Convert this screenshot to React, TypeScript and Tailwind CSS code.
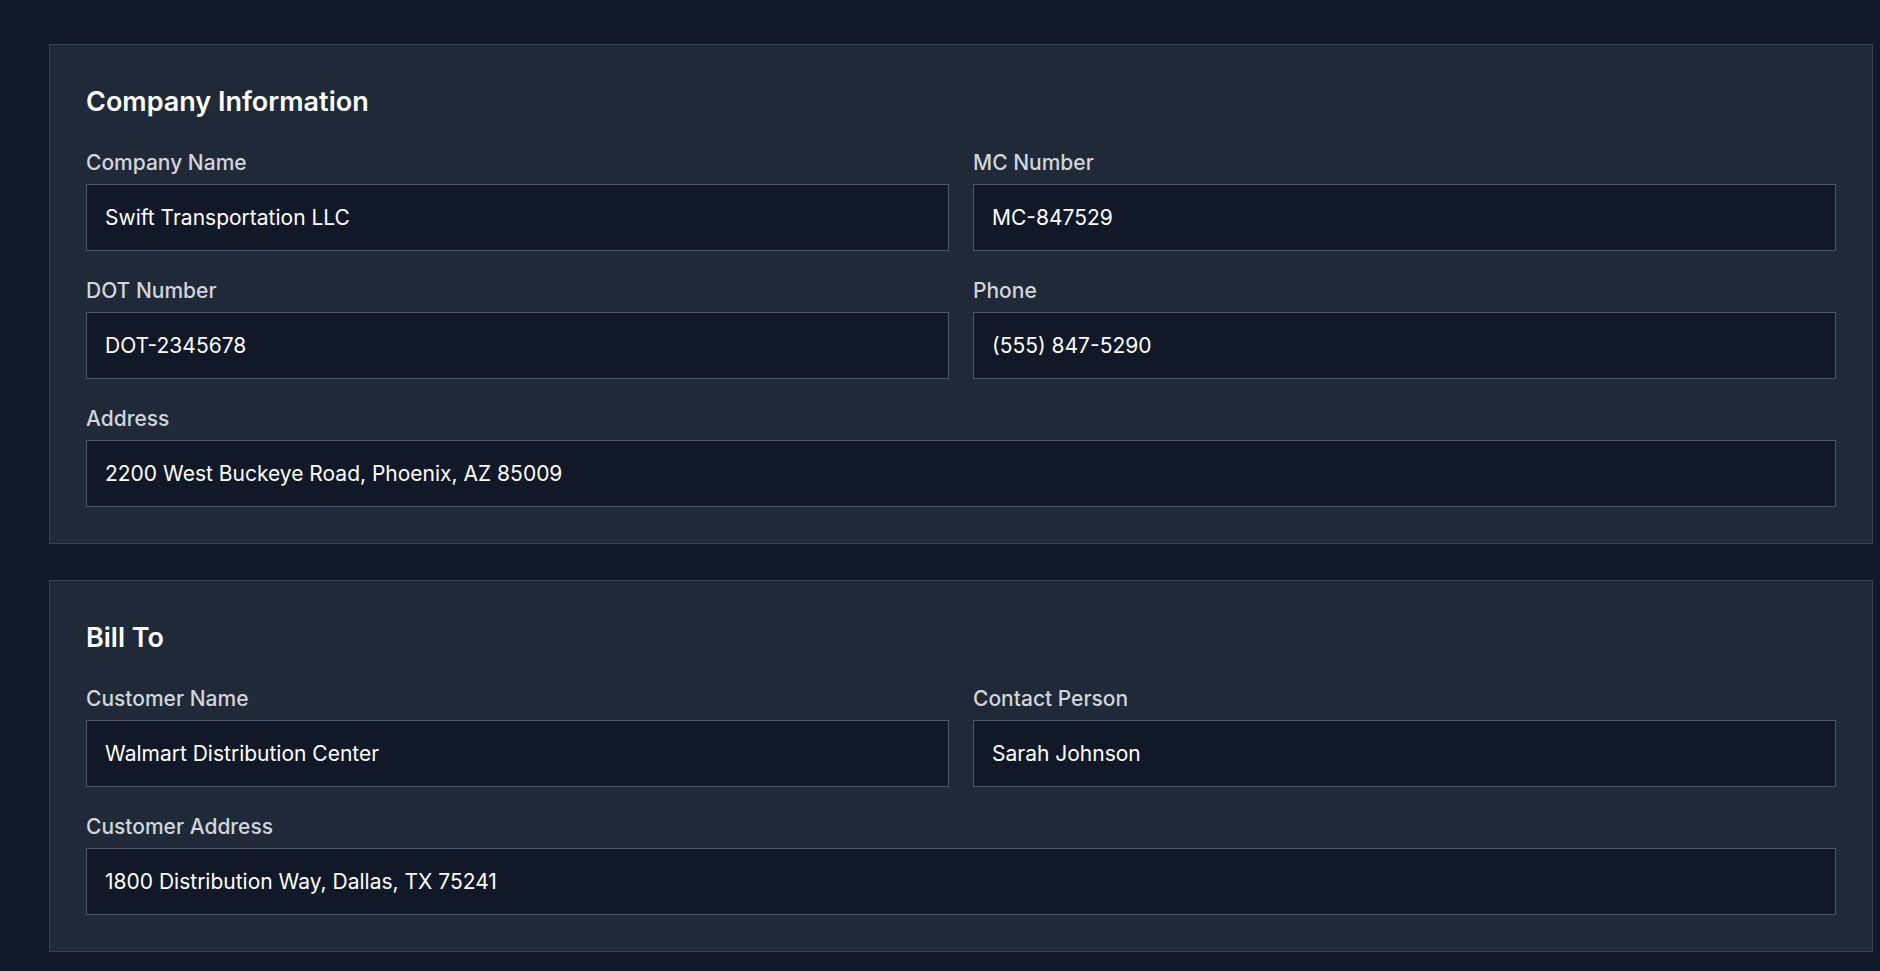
import React from 'react';

interface FieldProps {
  label: string;
  value: string;
  full?: boolean;
}

function Field({ label, value, full }: FieldProps) {
  return (
    <div className={full ? 'col-span-2 flex flex-col' : 'flex flex-col'}>
      <label className="text-[21px] leading-[28px] font-medium text-gray-300 mb-[7px]">{label}</label>
      <input
        type="text"
        readOnly
        value={value}
        className="h-[67px] w-full bg-[#111827] border border-[#4b5563] px-[18px] text-[21px] text-white outline-none"
      />
    </div>
  );
}

function Section({ title, children }: { title: string; children: React.ReactNode }) {
  return (
    <section className="bg-[#1f2937] border border-[#374151] px-[36px] pt-[37px] pb-[36px]">
      {/* Section heading */}
      <h2 className="text-[27px] leading-[40px] font-semibold text-white mb-[27px]">{title}</h2>
      <div className="grid grid-cols-2 gap-x-[24px] gap-y-[26px]">{children}</div>
    </section>
  );
}

export default function App() {
  return (
    <div
      className="min-h-screen bg-[#111827] pl-[49px] pr-[7px] pt-[44px] pb-[20px]"
      style={{ fontFamily: 'Inter, "Noto Sans", sans-serif' }}
    >
      <div className="flex flex-col gap-[36px]">
        <Section title="Company Information">
          <Field label="Company Name" value="Swift Transportation LLC" />
          <Field label="MC Number" value="MC-847529" />
          <Field label="DOT Number" value="DOT-2345678" />
          <Field label="Phone" value="(555) 847-5290" />
          <Field label="Address" value="2200 West Buckeye Road, Phoenix, AZ 85009" full />
        </Section>

        <Section title="Bill To">
          <Field label="Customer Name" value="Walmart Distribution Center" />
          <Field label="Contact Person" value="Sarah Johnson" />
          <Field label="Customer Address" value="1800 Distribution Way, Dallas, TX 75241" full />
        </Section>
      </div>
    </div>
  );
}
